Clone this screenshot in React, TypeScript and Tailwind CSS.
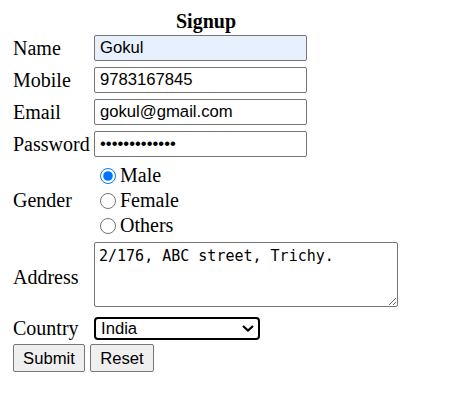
import React from "react";

const serif = { fontFamily: '"Liberation Serif", "Times New Roman", serif' };

const inputCls =
  "box-border w-[213px] h-[26px] border border-[#767676] rounded-[2px] px-[5px] py-0 text-[16.67px] text-black outline-none font-['Liberation_Sans',Arial,sans-serif]";

function Row({ label, children }: { label: string; children: React.ReactNode }) {
  return (
    <div className="flex items-center h-[30px]">
      <div className="w-[81px] shrink-0 leading-[23px]">{label}</div>
      {children}
    </div>
  );
}

function Radio({ label, checked }: { label: string; checked?: boolean }) {
  return (
    <label className="flex items-center h-[25px] leading-[23px]">
      <input
        type="radio"
        name="gender"
        defaultChecked={checked}
        className="w-[16px] h-[16px] m-0 ml-[6px] mr-[4px] accent-[#0075ff]"
      />
      <span>{label}</span>
    </label>
  );
}

export default function App() {
  return (
    <div className="bg-white w-[472px] h-[408px] pt-[10px] pl-[13px] text-black text-[20px]" style={serif}>
      <div className="w-[386px]">
        <div className="text-center font-bold leading-[23px]">Signup</div>
        <div className="flex flex-col gap-[2px]">
          <Row label="Name">
            <input className={inputCls + " bg-[#e8f0fe]"} defaultValue="Gokul" />
          </Row>
          <Row label="Mobile">
            <input className={inputCls + " bg-white"} defaultValue="9783167845" />
          </Row>
          <Row label="Email">
            <input className={inputCls + " bg-white"} defaultValue="gokul@gmail.com" />
          </Row>
          <Row label="Password">
            <input type="password" className={inputCls + " bg-white"} defaultValue="gokul@1234567" />
          </Row>
        </div>
        <div className="flex items-center mt-[4px]">
          <div className="w-[81px] shrink-0 leading-[23px]">Gender</div>
          <div className="flex flex-col">
            <Radio label="Male" checked />
            <Radio label="Female" />
            <Radio label="Others" />
          </div>
        </div>
        <div className="flex items-center mt-[4px]">
          <div className="w-[81px] shrink-0 leading-[23px]">Address</div>
          <div className="pb-[5px] flex">
            <textarea
              className="block box-border w-[304px] h-[65px] border border-[#767676] rounded-[2px] px-[4px] pt-[5px] pb-[3px] text-[15px] leading-[17px] text-black outline-none font-['DejaVu_Sans_Mono',monospace]"
              defaultValue="2/176, ABC street, Trichy."
            />
          </div>
        </div>
        <div className="flex items-center mt-[5px] h-[23px]">
          <div className="w-[81px] shrink-0 leading-[23px]">Country</div>
          <div className="relative w-[166px] h-[23px]">
            <select
              defaultValue="India"
              className="block appearance-none box-border w-full h-[23px] border-2 border-black rounded-[4px] pl-[5px] pr-[20px] py-0 text-[16.67px] leading-[19px] text-black bg-white outline-none font-['Liberation_Sans',Arial,sans-serif]"
            >
              <option>India</option>
              <option>USA</option>
              <option>UK</option>
            </select>
            <svg
              className="absolute right-[6px] top-[8px] pointer-events-none"
              width="12"
              height="7"
              viewBox="0 0 12 7"
            >
              <path d="M1 1 L6 5.5 L11 1" fill="none" stroke="#000" strokeWidth="2.2" />
            </svg>
          </div>
        </div>
        <div className="flex gap-[5px] mt-[4px] font-['Liberation_Sans',Arial,sans-serif]">
          <button className="box-border w-[72px] h-[28px] border border-[#767676] rounded-[2px] bg-[#efefef] text-[16.67px] text-black">
            Submit
          </button>
          <button className="box-border w-[64px] h-[28px] border border-[#767676] rounded-[2px] bg-[#efefef] text-[16.67px] text-black">
            Reset
          </button>
        </div>
      </div>
    </div>
  );
}
